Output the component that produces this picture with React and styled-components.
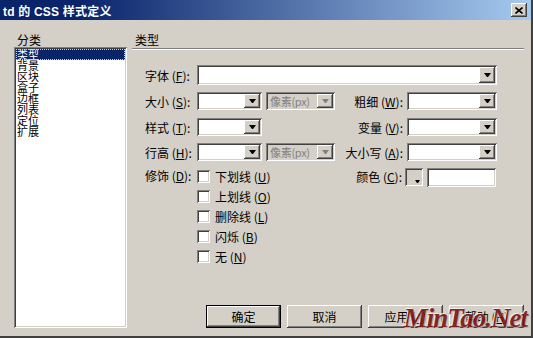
import styled, { createGlobalStyle, css } from "styled-components";

const GlobalStyle = createGlobalStyle`
  html, body {
    margin: 0;
    padding: 0;
    background: #d4d0c8;
  }
  body {
    font-family: "Noto Sans CJK SC", "Liberation Sans", sans-serif;
    font-size: 12px;
    color: #000;
  }
`;

const sunken = css`
  box-shadow: inset 1px 1px #808080, inset -1px -1px #fff,
    inset 2px 2px #404040, inset -2px -2px #d4d0c8;
`;

const raised = css`
  box-shadow: inset -1px -1px #404040, inset 1px 1px #fff,
    inset -2px -2px #808080, inset 2px 2px #d4d0c8;
`;

const CATEGORIES = ["类型", "背景", "区块", "盒子", "边框", "列表", "定位", "扩展"];
const DECORATIONS = [
  ["下划线", "U"],
  ["上划线", "O"],
  ["删除线", "L"],
  ["闪烁", "B"],
  ["无", "N"],
];

const Key = ({ label, k, colon = true }) => (
  <>
    {label} (<u>{k}</u>){colon ? ":" : ""}
  </>
);

const Combo = ({ width, height = 18, disabled, value }) => (
  <ComboBox $width={width} $height={height} $disabled={disabled}>
    <ComboValue>{value}</ComboValue>
    <DropButton $disabled={disabled}>
      <Arrow $disabled={disabled} />
    </DropButton>
  </ComboBox>
);

const App = () => {
  return (
    <>
      <GlobalStyle />
      <Window>
        <TitleBar>
          <Title>td 的 CSS 样式定义</Title>
          <CloseButton>
            <svg width="8" height="7" viewBox="0 0 8 7">
              <path d="M0.5 0.5 L7.5 6.5 M7.5 0.5 L0.5 6.5" stroke="#000" strokeWidth="1.6" />
            </svg>
          </CloseButton>
        </TitleBar>

        <Body>
          <Sidebar>
            <SectionLabel>分类</SectionLabel>
            <ListBox>
              {CATEGORIES.map((c, i) => (
                <ListItem key={c} $selected={i === 0}>
                  {c}
                </ListItem>
              ))}
            </ListBox>
          </Sidebar>

          <Main>
            <SectionLabel>类型</SectionLabel>
            <Rule />
            <Form>
              <Row $mb={7}>
                <Label>
                  <Key label="字体" k="F" />
                </Label>
                <Combo width={300} height={20} />
              </Row>

              <Row $mb={8}>
                <Label>
                  <Key label="大小" k="S" />
                </Label>
                <Combo width={65} />
                <Gap $w={4} />
                <Combo width={69} disabled value="像素(px)" />
                <SideLabel>
                  <Key label="粗细" k="W" />
                </SideLabel>
                <Combo width={90} />
              </Row>

              <Row $mb={7}>
                <Label>
                  <Key label="样式" k="T" />
                </Label>
                <Combo width={65} />
                <Gap $w={73} />
                <SideLabel>
                  <Key label="变量" k="V" />
                </SideLabel>
                <Combo width={90} />
              </Row>

              <Row $mb={5}>
                <Label>
                  <Key label="行高" k="H" />
                </Label>
                <Combo width={65} />
                <Gap $w={4} />
                <Combo width={69} disabled value="像素(px)" />
                <SideLabel>
                  <Key label="大小写" k="A" />
                </SideLabel>
                <Combo width={90} />
              </Row>

              <Row $top>
                <Label $tall>
                  <Key label="修饰" k="D" />
                </Label>
                <CheckList>
                  {DECORATIONS.map(([label, k]) => (
                    <CheckItem key={label}>
                      <CheckBox />
                      <span>
                        <Key label={label} k={k} colon={false} />
                      </span>
                    </CheckItem>
                  ))}
                </CheckList>
                <SideLabel $tall $pad={3}>
                  <Key label="颜色" k="C" />
                </SideLabel>
                <Swatch>
                  <SwatchArrow />
                </Swatch>
                <ColorInput />
              </Row>
            </Form>

            <ButtonRow>
              <Button $default>确定</Button>
              <Button>取消</Button>
              <Button>
                应用 (<u>A</u>)
              </Button>
              <Button>
                帮助 (<u>H</u>)
              </Button>
            </ButtonRow>
          </Main>
        </Body>

        <Watermark>MinTao.Net</Watermark>
      </Window>
    </>
  );
};

const Window = styled.div`
  position: relative;
  width: 533px;
  height: 338px;
  box-sizing: border-box;
  display: flex;
  flex-direction: column;
  background: #d4d0c8;
  border-right: 2px solid #404040;
  border-bottom: 2px solid #404040;
  overflow: hidden;
`;

const TitleBar = styled.div`
  height: 20px;
  display: flex;
  align-items: center;
  justify-content: space-between;
  padding: 0 4px 0 3px;
  background: linear-gradient(90deg, #0a246a 0%, #0a246a 15%, #a6caf0 100%);
`;

const Title = styled.span`
  color: #fff;
  font-weight: bold;
  font-size: 12px;
  font-family: "Liberation Sans", "Noto Sans CJK SC", sans-serif;
  letter-spacing: 0.2px;
`;

const CloseButton = styled.div`
  width: 16px;
  height: 14px;
  display: flex;
  align-items: center;
  justify-content: center;
  background: #d4d0c8;
  ${raised};
`;

const Body = styled.div`
  flex: 1;
  display: flex;
  min-height: 0;
`;

const Sidebar = styled.div`
  width: 132px;
  box-sizing: border-box;
  padding: 13px 0 0 14px;
  display: flex;
  flex-direction: column;
`;

const SectionLabel = styled.div`
  height: 14px;
  line-height: 14px;
  padding-left: 3px;
`;

const ListBox = styled.div`
  width: 113px;
  height: 281px;
  box-sizing: border-box;
  padding: 2px;
  background: #fff;
  ${sunken};
`;

const ListItem = styled.div`
  height: 11px;
  line-height: 11px;
  font-size: 11px;
  padding-left: 1px;
  white-space: nowrap;
  color: ${(p) => (p.$selected ? "#fff" : "#000")};
  background: ${(p) => (p.$selected ? "#0a246a" : "transparent")};
  outline: ${(p) => (p.$selected ? "1px dotted #d4d0c8" : "none")};
  outline-offset: -1px;
`;

const Main = styled.div`
  flex: 1;
  display: flex;
  flex-direction: column;
  padding: 13px 7px 8px 0;
`;

const Rule = styled.div`
  margin-top: 1px;
  border-top: 1px solid #808080;
  border-bottom: 1px solid #fff;
`;

const Form = styled.div`
  margin-top: 15px;
  padding-left: 13px;
  display: flex;
  flex-direction: column;
`;

const Row = styled.div`
  display: flex;
  align-items: ${(p) => (p.$top ? "flex-start" : "center")};
  margin-bottom: ${(p) => p.$mb || 0}px;
`;

const Label = styled.div`
  width: 52px;
  flex-shrink: 0;
  white-space: nowrap;
  line-height: ${(p) => (p.$tall ? "20px" : "normal")};
`;

const SideLabel = styled.div`
  width: 70px;
  flex-shrink: 0;
  box-sizing: border-box;
  text-align: right;
  padding-right: ${(p) => p.$pad ?? 2}px;
  margin-right: ${(p) => (p.$pad ? 0 : 2)}px;
  white-space: nowrap;
  line-height: ${(p) => (p.$tall ? "22px" : "normal")};
`;

const Gap = styled.div`
  width: ${(p) => p.$w}px;
  flex-shrink: 0;
`;

const ComboBox = styled.div`
  width: ${(p) => p.$width}px;
  height: ${(p) => p.$height}px;
  flex-shrink: 0;
  box-sizing: border-box;
  padding: 2px;
  display: flex;
  background: ${(p) => (p.$disabled ? "#d4d0c8" : "#fff")};
  ${sunken};
`;

const ComboValue = styled.div`
  flex: 1;
  padding-left: 2px;
  font-size: 11px;
  line-height: 14px;
  letter-spacing: -0.3px;
  color: #808080;
  white-space: nowrap;
  overflow: hidden;
`;

const DropButton = styled.div`
  width: 16px;
  flex-shrink: 0;
  display: flex;
  align-items: center;
  justify-content: center;
  background: #d4d0c8;
  ${raised};
`;

const Arrow = styled.div`
  width: 1px;
  height: 0;
  border-left: 3px solid transparent;
  border-right: 3px solid transparent;
  border-top: 4px solid ${(p) => (p.$disabled ? "#808080" : "#000")};
`;

const CheckList = styled.div`
  width: 138px;
  flex-shrink: 0;
  display: flex;
  flex-direction: column;
`;

const CheckItem = styled.div`
  height: 20px;
  display: flex;
  align-items: center;
  gap: 5px;
  white-space: nowrap;
`;

const CheckBox = styled.div`
  width: 13px;
  height: 13px;
  flex-shrink: 0;
  background: #fff;
  ${sunken};
`;

const Swatch = styled.div`
  position: relative;
  width: 18px;
  height: 18px;
  margin-top: 2px;
  flex-shrink: 0;
  background: #d4d0c8;
  ${sunken};
`;

const SwatchArrow = styled.div`
  position: absolute;
  right: 3px;
  bottom: 3px;
  width: 1px;
  height: 0;
  border-left: 2px solid transparent;
  border-right: 2px solid transparent;
  border-top: 3px solid #000;
`;

const ColorInput = styled.div`
  width: 69px;
  height: 19px;
  margin: 2px 0 0 4px;
  flex-shrink: 0;
  background: #fff;
  ${sunken};
`;

const ButtonRow = styled.div`
  margin-top: auto;
  display: flex;
  justify-content: flex-end;
  gap: 6px;
`;

const Button = styled.div`
  width: 75px;
  height: 23px;
  box-sizing: border-box;
  display: flex;
  align-items: center;
  justify-content: center;
  background: #d4d0c8;
  white-space: nowrap;
  border: ${(p) => (p.$default ? "1px solid #000" : "none")};
  ${raised};
`;

const Watermark = styled.div`
  position: absolute;
  right: 4px;
  bottom: 2px;
  font-family: "Liberation Serif", serif;
  font-style: italic;
  font-weight: bold;
  font-size: 27px;
  letter-spacing: -1px;
  color: #7c1414;
  text-shadow: 1px 1px 0 #b8b4ac, -1px -1px 0 #f4f2ee;
  opacity: 0.9;
  pointer-events: none;
`;

export default App;
